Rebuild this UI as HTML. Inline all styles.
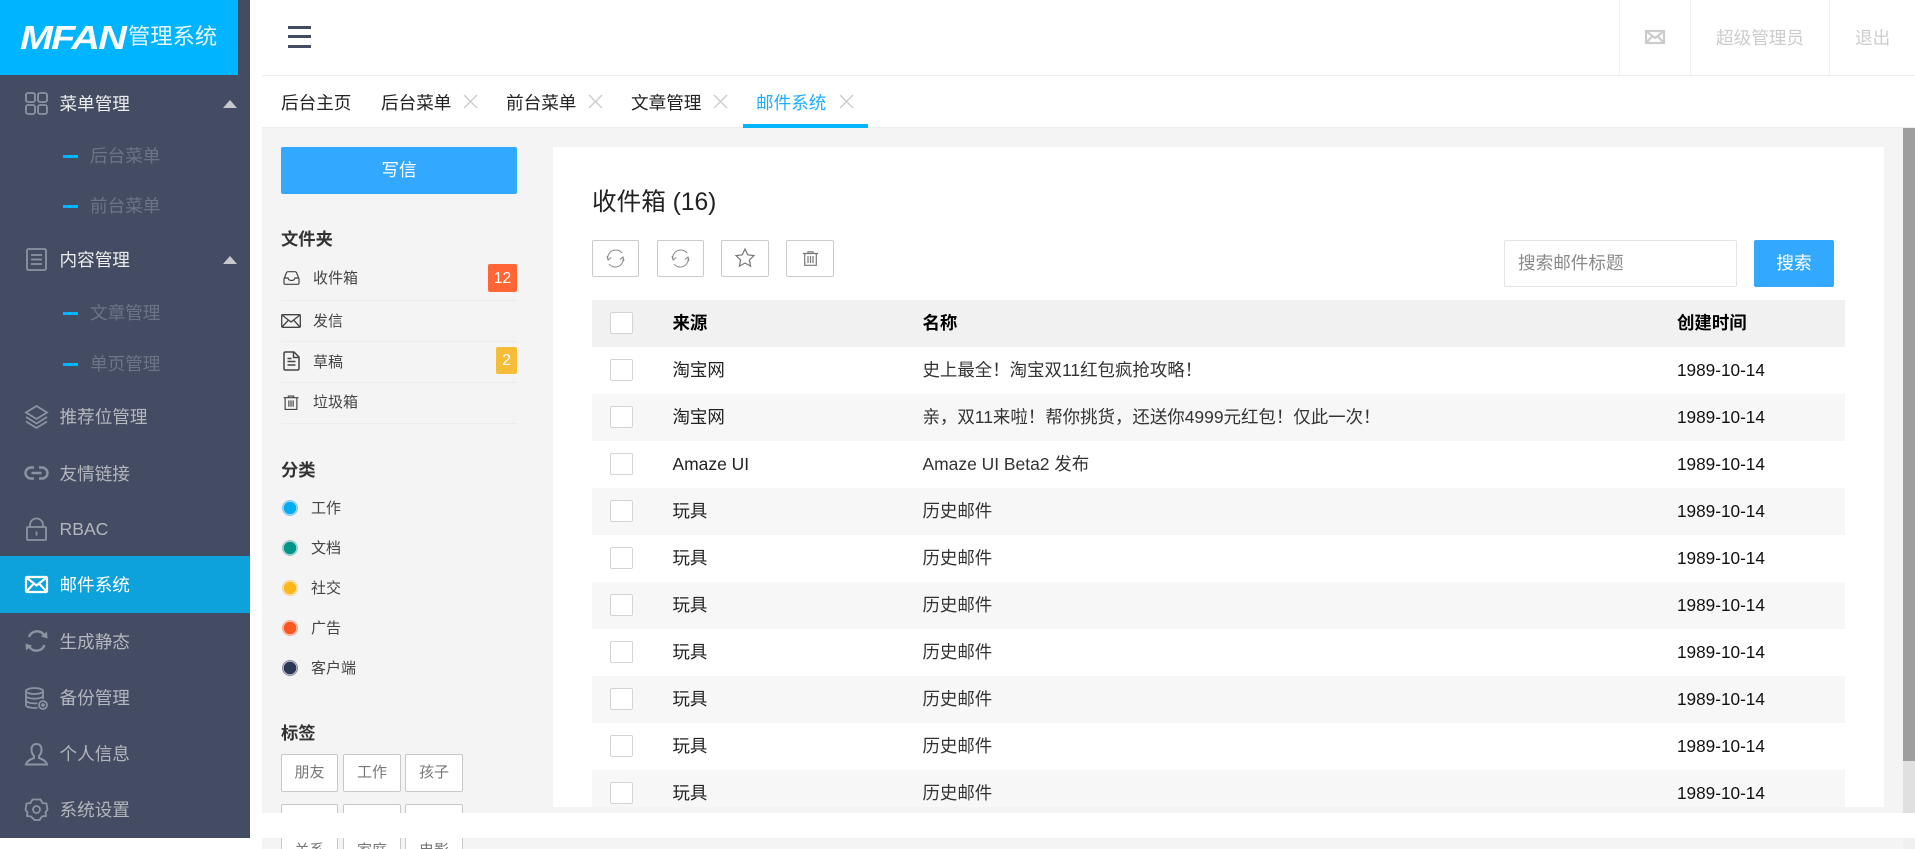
<!DOCTYPE html>
<html lang="zh-CN"><head><meta charset="utf-8"><title>MFAN</title>
<style>
*{box-sizing:border-box;margin:0;padding:0}
html,body{width:1915px;height:849px;overflow:hidden;background:#fff}
body{position:relative;font-family:"Liberation Sans","Noto Sans CJK SC",sans-serif;color:#333}
.a{position:absolute}
.t{position:absolute;height:40px;line-height:40px;white-space:nowrap}
svg{position:absolute;overflow:visible;fill:none}
.m{font-size:17.6px;color:#b4b6bd;left:59.500px;margin-top:1px}
.w{color:#eceded}
.s{font-size:17.6px;color:#6d7487;left:90px;margin-top:1px}
.d{position:absolute;left:63px;width:15px;height:2.5px;background:#00b4ff}
.up{position:absolute;left:223px;width:0;height:0;border-left:7.5px solid transparent;border-right:7.5px solid transparent;border-bottom:8px solid #c6c8cd}
.ic{stroke:#8d93a3;stroke-width:1.8}
.tab{font-size:17.6px;color:#222;top:83px}
.x{stroke:#ccc;stroke-width:1.4}
.h{font-size:17.3px;font-weight:bold;color:#333;left:281px}
.f{font-size:15px;color:#444;left:313px;margin-top:1px}
.ln{position:absolute;left:281px;width:236px;height:1px;background:#ececec}
.dot{position:absolute;left:282px;width:16px;height:16px;border-radius:50%;border:1px solid;box-shadow:inset 0 0 0 .6px #f4f4f4}
.c{font-size:15px;color:#444;left:311px;margin-top:1px}
.tag{position:absolute;height:38px;background:#fff;border:1px solid #c8c8c8;border-radius:2px;font-size:15px;line-height:36px;text-align:center;color:#777}
.tb{position:absolute;top:240px;height:37px;background:#fff;border:1px solid #ccc;border-radius:2px}
.r{position:absolute;left:592px;width:1253px;height:47px}
.g{background:#f7f7f7}
.cb{position:absolute;left:18px;top:12px;width:23px;height:22px;background:#fff;border:1px solid #d4d4d4;border-radius:2px}
.r .t{top:3px;font-size:17.45px;color:#222}
.r .k{left:80.500px}.r .n{left:330.500px;color:#333}.r .e{left:1085px;color:#111;font-size:17.2px}
.hd .t{font-weight:bold;color:#000}
.hd{background:#f1f1f1}
</style></head><body>

<!-- sidebar -->
<div class="a" style="left:0;top:0;width:250px;height:838px;background:#444c63"></div>
<div class="a" style="left:0;top:0;width:238px;height:75px;background:#00b4ff"></div>
<div class="t" style="left:20px;top:18px;color:#fff;font-size:33px;font-weight:bold;font-style:italic;letter-spacing:-1.5px;transform:scaleX(1.2);transform-origin:left center">MFAN</div>
<div class="t" style="left:128px;top:17px;color:#e4f6ff;font-size:22.3px">管理系统</div>

<svg style="left:25px;top:92px" width="23" height="23" viewBox="0 0 23 23"><g class="ic"><rect x="1" y="1" width="9" height="9" rx="2"/><rect x="13" y="1" width="9" height="9" rx="2"/><rect x="1" y="13" width="9" height="9" rx="2"/><rect x="13" y="13" width="9" height="9" rx="2"/></g></svg>
<div class="t m w" style="top:83px">菜单管理</div><div class="up" style="top:100px"></div>
<div class="d" style="top:155px"></div><div class="t s" style="top:135px">后台菜单</div>
<div class="d" style="top:205px"></div><div class="t s" style="top:185px">前台菜单</div>

<svg style="left:26px;top:248px" width="21" height="23" viewBox="0 0 21 23"><g class="ic"><rect x="1" y="1" width="19" height="21" rx="1.5"/><path d="M5 7h11M5 11.500h11M5 16h11"/></g></svg>
<div class="t m w" style="top:239px">内容管理</div><div class="up" style="top:256px"></div>
<div class="d" style="top:312px"></div><div class="t s" style="top:292px">文章管理</div>
<div class="d" style="top:363px"></div><div class="t s" style="top:343px">单页管理</div>

<svg style="left:25px;top:405px" width="23" height="24" viewBox="0 0 23 24"><g class="ic"><path d="M11.500 1L22 7.500 11.500 14 1 7.500z"/><path d="M1 12l10.500 6.500L22 12"/><path d="M1 16.500l10.500 6.500L22 16.500"/></g></svg>
<div class="t m" style="top:396px">推荐位管理</div>

<svg style="left:25px;top:466px" width="23" height="14" viewBox="0 0 23 14"><g class="ic" style="stroke-width:2.400"><path d="M9 1.500H6a5.500 5.500 0 0 0 0 11h3M14 1.500h3a5.500 5.500 0 0 1 0 11h-3M6.500 7h10"/></g></svg>
<div class="t m" style="top:453px">友情链接</div>

<svg style="left:26px;top:518px" width="21" height="23" viewBox="0 0 21 23"><g class="ic"><rect x="1" y="9" width="19" height="13" rx="1"/><path d="M4 9V7a6.500 6.500 0 0 1 13 0v2M10.500 13.500v4"/></g></svg>
<div class="t m" style="top:508px">RBAC</div>

<div class="a" style="left:0;top:556px;width:250px;height:57px;background:#0ea2dc"></div>
<svg style="left:25px;top:576px" width="23" height="17" viewBox="0 0 23 17"><g stroke="#fff" stroke-width="2.200"><rect x="1" y="1" width="21" height="15" rx="1"/><path d="M1.500 1.500l10 8 10-8M1.500 15.500l7-7.500M21.500 15.500l-7-7.500"/></g></svg>
<div class="t m" style="top:564px;color:#fff">邮件系统</div>

<svg style="left:25px;top:630px" width="23" height="22" viewBox="0 0 23 22"><g class="ic" style="stroke-width:2.400"><path d="M4 7a8.500 8.500 0 0 1 15-2M19.500 15a8.500 8.500 0 0 1-15 2"/></g><path d="M16 6.500l6.500 2-.5-7zM7 15.500l-6.500-2 .5 7z" fill="#8d93a3"/></svg>
<div class="t m" style="top:621px">生成静态</div>

<svg style="left:25px;top:687px" width="23" height="23" viewBox="0 0 23 23"><g class="ic"><ellipse cx="9.500" cy="4" rx="8.500" ry="3"/><path d="M1 4v14c0 1.700 3.500 3 8.500 3 1 0 2 0 3-.2M18 4v8M1 8.700c0 1.700 3.500 3 8.500 3s8.500-1.300 8.500-3M1 13.400c0 1.700 3.500 3 8.500 3 1 0 2 0 3-.2"/><circle cx="18" cy="18" r="4"/><path d="M18 16v4M16 18h4"/></g></svg>
<div class="t m" style="top:677px">备份管理</div>

<svg style="left:25px;top:743px" width="23" height="23" viewBox="0 0 23 23"><g class="ic" style="stroke-width:2"><path d="M11.500 1c-3.500 0-5 2.500-5 5.500 0 3 1 5 2.500 6.500v2c-3 1-7 2.500-8 6.500h21c-1-4-5-5.500-8-6.500v-2c1.500-1.500 2.500-3.500 2.500-6.500 0-3-1.500-5.500-5-5.500z"/></g></svg>
<div class="t m" style="top:733px">个人信息</div>

<svg style="left:25px;top:798px" width="23" height="23" viewBox="0 0 23 23"><g class="ic"><path d="M7.500 1.500h8l2 3.500 4 .5 1 6-2 3 .5 3.500-4 .5-2.500 3.500h-5L6 18.500l-4-.5.500-3.500-2-3 1-6 4-.5z"/><circle cx="11.500" cy="11.500" r="3.500"/></g></svg>
<div class="t m" style="top:789px">系统设置</div>

<!-- top bar -->
<div class="a" style="left:262px;top:75px;width:1653px;height:1px;background:#eee"></div>
<div class="a" style="left:288px;top:26px;width:23px;height:3px;background:#444c63"></div>
<div class="a" style="left:288px;top:35px;width:23px;height:3px;background:#444c63"></div>
<div class="a" style="left:288px;top:45px;width:23px;height:3px;background:#444c63"></div>
<div class="a" style="left:1619px;top:1px;width:1px;height:74px;background:#f0f0f0"></div>
<div class="a" style="left:1690px;top:1px;width:1px;height:74px;background:#f0f0f0"></div>
<div class="a" style="left:1829px;top:1px;width:1px;height:74px;background:#f0f0f0"></div>
<svg style="left:1645px;top:30px" width="20" height="14" viewBox="0 0 20 14"><g stroke="#ccc" stroke-width="2.200"><rect x="1" y="1" width="18" height="12"/><path d="M1 1l9 7 9-7M1 13l6.500-7M19 13l-6.500-7"/></g></svg>
<div class="t" style="left:1716px;top:18px;font-size:17.6px;color:#ccc">超级管理员</div>
<div class="t" style="left:1855px;top:18px;font-size:17.6px;color:#ccc">退出</div>

<!-- tabs -->
<div class="t tab" style="left:281px">后台主页</div>
<div class="t tab" style="left:381px">后台菜单</div>
<svg style="left:464px;top:95px" width="13" height="13"><path class="x" d="M0 0l13 13M13 0L0 13"/></svg>
<div class="t tab" style="left:506px">前台菜单</div>
<svg style="left:589px;top:95px" width="13" height="13"><path class="x" d="M0 0l13 13M13 0L0 13"/></svg>
<div class="t tab" style="left:631px">文章管理</div>
<svg style="left:714px;top:95px" width="13" height="13"><path class="x" d="M0 0l13 13M13 0L0 13"/></svg>
<div class="t tab" style="left:756px;color:#1eaeff">邮件系统</div>
<svg style="left:840px;top:95px" width="13" height="13"><path class="x" d="M0 0l13 13M13 0L0 13"/></svg>

<!-- content background -->
<div class="a" style="left:262px;top:127px;width:1653px;height:722px;background:#f4f4f4;border-top:1px solid #eee"></div>
<div class="a" style="left:743px;top:124px;width:125px;height:4px;background:#00b4ff"></div>
<div class="a" style="left:1903px;top:128px;width:12px;height:685px;background:#e0e0e0"></div>
<div class="a" style="left:1903px;top:128px;width:12px;height:633px;background:#9e9e9e"></div>
<div class="a" style="left:1903px;top:838px;width:12px;height:11px;background:#f0f0f0"></div>

<!-- left column -->
<div class="a" style="left:281px;top:147px;width:236px;height:47px;background:#33a8ff;border-radius:2px;color:#fff;font-size:17.6px;line-height:46px;text-align:center">写信</div>
<div class="t h" style="top:219px">文件夹</div>

<svg style="left:283px;top:271px" width="17" height="14" viewBox="0 0 17 14"><g stroke="#444" stroke-width="1.200"><path d="M1 8l2.500-6.500C4 1 4.500 .700 5 .700h7c.5 0 1 .3 1.500 .8L16 8v4c0 .8-.5 1.300-1.300 1.300H2.300C1.500 13.300 1 12.800 1 12z"/><path d="M1 7h4c.5 2 1.500 2.500 3.500 2.500S11.500 9 12 7h4"/></g></svg>
<div class="t f" style="top:258px">收件箱</div>
<div class="a" style="left:488px;top:264px;width:29px;height:28px;background:#ff6636;border-radius:2px;color:#fff;font-size:15.500px;line-height:29px;text-align:center">12</div>
<div class="ln" style="top:300px"></div>

<svg style="left:281px;top:314px" width="20" height="14" viewBox="0 0 20 14"><g stroke="#444" stroke-width="1.300"><rect x=".7" y=".7" width="18.600" height="12.600" rx="1"/><path d="M1 1l9 7 9-7M1 13l6.500-7M19 13l-6.500-7"/></g></svg>
<div class="t f" style="top:301px">发信</div>
<div class="ln" style="top:341px"></div>

<svg style="left:283px;top:351px" width="17" height="20" viewBox="0 0 17 20"><g stroke="#444" stroke-width="1.500"><path d="M1 2.500C1 1.500 1.500 1 2.500 1H11l5 5v11.500c0 1-.5 1.500-1.500 1.500h-12C1.500 19 1 18.500 1 17.500z"/><path d="M10.500 1v5.500H16M4.500 7.500h4M4.500 10.500h8M4.500 14h8"/></g></svg>
<div class="t f" style="top:342px">草稿</div>
<div class="a" style="left:496px;top:347px;width:21px;height:27px;background:#f6bd39;border-radius:2px;color:#fff;font-size:15.500px;line-height:28px;text-align:center">2</div>
<div class="ln" style="top:382px"></div>

<svg style="left:283px;top:395px" width="16" height="15" viewBox="0 0 15 14"><g stroke="#444" stroke-width="1.100"><path d="M.5 2.500h14M5 2.500V1h5v1.500M2 2.500v11h11v-11M5.500 5v6M7.500 5v6M9.500 5v6"/></g></svg>
<div class="t f" style="top:382px">垃圾箱</div>
<div class="ln" style="top:423px"></div>

<div class="t h" style="top:450px">分类</div>
<div class="dot" style="top:500px;background:#00aeef;border-color:#7fc4ff"></div><div class="t c" style="top:488px">工作</div>
<div class="dot" style="top:540px;background:#009688;border-color:#9cc"></div><div class="t c" style="top:528px">文档</div>
<div class="dot" style="top:580px;background:#fbb81d;border-color:#fbd28a"></div><div class="t c" style="top:568px">社交</div>
<div class="dot" style="top:620px;background:#ff5722;border-color:#ffa98e"></div><div class="t c" style="top:608px">广告</div>
<div class="dot" style="top:660px;background:#2a3a55;border-color:#8a90a0"></div><div class="t c" style="top:648px">客户端</div>

<div class="t h" style="top:713px">标签</div>
<div class="tag" style="left:281px;top:754px;width:57px">朋友</div>
<div class="tag" style="left:343px;top:754px;width:58px">工作</div>
<div class="tag" style="left:405px;top:754px;width:58px">孩子</div>
<div class="tag" style="left:281px;top:804px;width:57px;height:20px"></div>
<div class="tag" style="left:343px;top:804px;width:58px;height:20px"></div>
<div class="tag" style="left:405px;top:804px;width:58px;height:20px"></div>
<div class="tag" style="left:281px;top:832px;width:57px">关系</div>
<div class="tag" style="left:343px;top:832px;width:58px">家庭</div>
<div class="tag" style="left:405px;top:832px;width:58px">电影</div>

<!-- main panel -->
<div class="a" style="left:553px;top:147px;width:1331px;height:660px;background:#fff"></div>
<div class="t" style="left:592px;top:183px;font-size:24.6px;color:#222">收件箱 (16)</div>

<div class="tb" style="left:592px;width:47px"></div>
<div class="tb" style="left:657px;width:47px"></div>
<div class="tb" style="left:721px;width:48px"></div>
<div class="tb" style="left:786px;width:48px"></div>
<svg style="left:606px;top:249px" width="19" height="19" viewBox="0 0 19 19"><g stroke="#888" stroke-width="1"><path d="M2 11A8 8 0 0 1 16 4M17 8A8 8 0 0 1 3 15"/><path d="M1 7l1.200 4 3-2.500M18 12l-1-4-3.200 2.500"/></g></svg>
<svg style="left:671px;top:249px" width="19" height="19" viewBox="0 0 19 19"><g stroke="#888" stroke-width="1"><path d="M2 11A8 8 0 0 1 16 4M17 8A8 8 0 0 1 3 15"/><path d="M1 7l1.200 4 3-2.500M18 12l-1-4-3.200 2.500"/></g></svg>
<svg style="left:735px;top:248px" width="20" height="20" viewBox="0 0 20 20"><path stroke="#777" stroke-width="1.200" d="M10 1l2.700 5.800 6.300.8-4.600 4.300 1.200 6.200-5.600-3.100-5.600 3.100 1.200-6.200L1 7.600l6.300-.8z"/></svg>
<svg style="left:803px;top:251px" width="15" height="15" viewBox="0 0 15 15"><g stroke="#777" stroke-width="1.200"><path d="M0 2.500h15M5 2.500V.8h5v1.700M1.700 2.500v11.800h11.600V2.500M5 5v7M7.500 5v7M10 5v7"/></g></svg>

<div class="a" style="left:1504px;top:240px;width:233px;height:47px;background:#fff;border:1px solid #e4e4e4;border-radius:2px"></div>
<div class="t" style="left:1518px;top:243px;font-size:17.6px;color:#8a8a8a">搜索邮件标题</div>
<div class="a" style="left:1754px;top:240px;width:80px;height:47px;background:#33a8ff;border-radius:2px;color:#fff;font-size:17.6px;line-height:46px;text-align:center">搜索</div>

<!-- table -->
<div class="r hd" style="top:300px"><div class="cb"></div><div class="t k">来源</div><div class="t n" style="color:#000">名称</div><div class="t e" style="color:#000;font-size:17.45px">创建时间</div></div>
<div class="r" style="top:347px"><div class="cb"></div><div class="t k">淘宝网</div><div class="t n">史上最全！淘宝双11红包疯抢攻略！</div><div class="t e">1989-10-14</div></div>
<div class="r g" style="top:394px"><div class="cb"></div><div class="t k">淘宝网</div><div class="t n">亲，双11来啦！帮你挑货，还送你4999元红包！仅此一次！</div><div class="t e">1989-10-14</div></div>
<div class="r" style="top:441px"><div class="cb"></div><div class="t k">Amaze UI</div><div class="t n">Amaze UI Beta2 发布</div><div class="t e">1989-10-14</div></div>
<div class="r g" style="top:488px"><div class="cb"></div><div class="t k">玩具</div><div class="t n">历史邮件</div><div class="t e">1989-10-14</div></div>
<div class="r" style="top:535px"><div class="cb"></div><div class="t k">玩具</div><div class="t n">历史邮件</div><div class="t e">1989-10-14</div></div>
<div class="r g" style="top:582px"><div class="cb"></div><div class="t k">玩具</div><div class="t n">历史邮件</div><div class="t e">1989-10-14</div></div>
<div class="r" style="top:629px"><div class="cb"></div><div class="t k">玩具</div><div class="t n">历史邮件</div><div class="t e">1989-10-14</div></div>
<div class="r g" style="top:676px"><div class="cb"></div><div class="t k">玩具</div><div class="t n">历史邮件</div><div class="t e">1989-10-14</div></div>
<div class="r" style="top:723px"><div class="cb"></div><div class="t k">玩具</div><div class="t n">历史邮件</div><div class="t e">1989-10-14</div></div>
<div class="r g" style="top:770px;height:37px;overflow:hidden"><div class="cb"></div><div class="t k">玩具</div><div class="t n">历史邮件</div><div class="t e">1989-10-14</div></div>

<!-- white band -->
<div class="a" style="left:262px;top:813px;width:1653px;height:25px;background:#fff"></div>
</body></html>
